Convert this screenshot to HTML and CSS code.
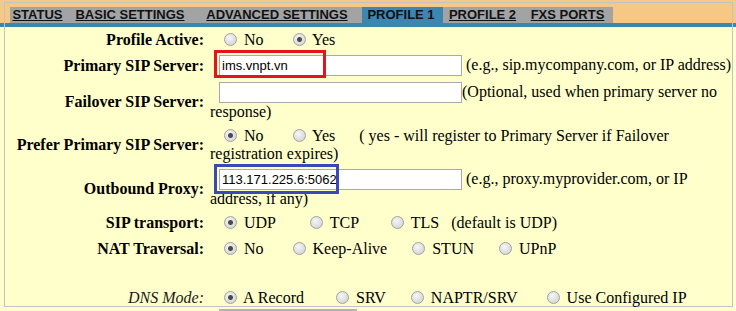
FILE: index.html
```html
<!DOCTYPE html>
<html lang="en">
<head>
    <meta charset="UTF-8">
    <meta name="viewport" content="width=device-width, initial-scale=1.0">
    <title>Profile 1</title>
    <link rel="stylesheet" href="styles.css">
</head>
<body>
    <div class="frame">
        <div class="tabs">
            <a class="tab" href="#">STATUS</a>
            <a class="tab" href="#">BASIC SETTINGS</a>
            <a class="tab" href="#">ADVANCED SETTINGS</a>
            <span class="tab tab-on">PROFILE 1</span>
            <a class="tab" href="#">PROFILE 2</a>
            <a class="tab" href="#">FXS PORTS</a>
        </div>

        <div class="form">
            <div class="row">
                <div class="label">Profile Active:</div>
                <div class="value">
                    <label class="opt"><input type="radio" name="active"> No</label>
                    <label class="opt"><input type="radio" name="active" checked> Yes</label>
                </div>
            </div>
            <div class="row">
                <div class="label">Primary SIP Server:</div>
                <div class="value value-nowrap">
                    <span class="field"><input class="text" type="text" value="ims.vnpt.vn"><span class="mark mark-red"></span></span>
                    <span class="hint">(e.g., sip.mycompany.com, or IP address)</span>
                </div>
            </div>
            <div class="row">
                <div class="label">Failover SIP Server:</div>
                <div class="value">
                    <span class="field"><input class="text" type="text" value=""></span><span class="hint">(Optional, used when primary server no response)</span>
                </div>
            </div>
            <div class="row">
                <div class="label">Prefer Primary SIP Server:</div>
                <div class="value">
                    <label class="opt"><input type="radio" name="prefer" checked> No</label>
                    <label class="opt"><input type="radio" name="prefer"> Yes</label>
                    <span class="hint">( yes - will register to Primary Server if Failover</span>
                    <span class="hint">registration expires)</span>
                </div>
            </div>
            <div class="row">
                <div class="label">Outbound Proxy:</div>
                <div class="value">
                    <span class="field"><input class="text" type="text" value="113.171.225.6:5062"><span class="mark mark-blue"></span></span>
                    <span class="hint">(e.g., proxy.myprovider.com, or IP address, if any)</span>
                </div>
            </div>
            <div class="row">
                <div class="label">SIP transport:</div>
                <div class="value">
                    <label class="opt gap-xl"><input type="radio" name="transport" checked> UDP</label>
                    <label class="opt gap-l"><input type="radio" name="transport"> TCP</label>
                    <label class="opt gap-t"><input type="radio" name="transport"> TLS</label>
                    <span class="hint">(default is UDP)</span>
                </div>
            </div>
            <div class="row row-nat">
                <div class="label">NAT Traversal:</div>
                <div class="value">
                    <label class="opt"><input type="radio" name="nat" checked> No</label>
                    <label class="opt gap-s"><input type="radio" name="nat"> Keep-Alive</label>
                    <label class="opt gap-s"><input type="radio" name="nat"> STUN</label>
                    <label class="opt"><input type="radio" name="nat"> UPnP</label>
                </div>
            </div>
            <div class="row row-dns">
                <div class="label label-plain">DNS Mode:</div>
                <div class="value">
                    <label class="opt gap-l"><input type="radio" name="dns" checked> A Record</label>
                    <label class="opt gap-s"><input type="radio" name="dns"> SRV</label>
                    <label class="opt"><input type="radio" name="dns"> NAPTR/SRV</label>
                    <label class="opt"><input type="radio" name="dns"> Use Configured IP</label>
                </div>
            </div>
        </div>
    </div>
    <div class="next-edge"></div>
</body>
</html>
```

FILE: styles.css
```css
body {
    margin: 0;
    font-family: "Liberation Serif", "Times New Roman", serif;
    font-size: 16px;
    color: #000;
    background-color: #ffffcc;
    background-image: linear-gradient(#f5c886 0, #f5c886 23px, #3d86b1 23px, #3d86b1 27px, #ffffcc 27px);
    background-repeat: no-repeat;
    background-size: 100% 27px;
}
.frame {
    position: relative;
    width: 727px;
    height: 303px;
    margin: 2px 0 0 4px;
    border: 1px solid #c2c2c8;
}
.tabs {
    display: grid;
    grid-template-columns: 58px 127px 167px 81px 82px 88px;
    width: 603px;
    height: 16px;
    margin: 4px 0 0 5px;
    background: #a3a3a3;
    font: bold 13px/16px "Liberation Sans", Arial, sans-serif;
}
.tab {
    padding-right: 3px;
    text-align: center;
    color: #111;
    text-decoration: underline;
}
.tab-on {
    background: #3d86b1;
    text-decoration: none;
}
.form {
    margin-top: 5px;
}
.row {
    display: flex;
    align-items: center;
    padding: 3px 0;
}
.row-nat {
    margin-top: 2px;
}
.row-dns {
    margin-top: 25px;
}
.label {
    flex: none;
    width: 199px;
    padding-right: 1px;
    text-align: right;
    font-weight: bold;
}
.label-plain {
    font-weight: normal;
    font-style: italic;
    color: #1a1a1a;
}
.value {
    flex: 1;
    padding-left: 5px;
}
.value-nowrap {
    white-space: nowrap;
}
.field {
    position: relative;
    display: inline-block;
    margin-left: 9px;
}
.text {
    box-sizing: border-box;
    width: 243px;
    height: 21px;
    margin: 0;
    padding: 1px 2px;
    border: 1px solid #a9a9a9;
    background: #fff;
    color: #000;
    font: 13px "Liberation Sans", Arial, sans-serif;
}
.mark {
    position: absolute;
    left: -5px;
    top: -5px;
    box-sizing: border-box;
    border: 3px solid;
}
.mark-red {
    width: 112px;
    height: 28px;
    border-color: #e4141d;
}
.mark-blue {
    width: 125px;
    height: 30px;
    border-color: #3a48b8;
}
.opt {
    margin-right: 20px;
}
.opt:first-child {
    margin-left: 9px;
}
.gap-s {
    margin-right: 16px;
}
.gap-l {
    margin-right: 23px;
}
.gap-xl {
    margin-right: 25px;
}
.gap-t {
    margin-right: 8px;
}
.opt input {
    appearance: none;
    box-sizing: border-box;
    width: 13px;
    height: 13px;
    margin: 0 3px 0 5px;
    vertical-align: -1px;
    border: 1px solid #a2a2a2;
    border-radius: 50%;
    background: radial-gradient(circle at 40% 35%, #f6f6f6, #cdcdcd);
}
.opt input:checked {
    background: radial-gradient(circle, #4a4a4a 0, #4a4a4a 2px, rgba(74, 74, 74, 0) 3px),
                radial-gradient(circle at 40% 35%, #f6f6f6, #cdcdcd);
}
.next-edge {
    width: 138px;
    margin: 2px 0 0 219px;
    border-top: 2px solid #b4b4b4;
}
```
